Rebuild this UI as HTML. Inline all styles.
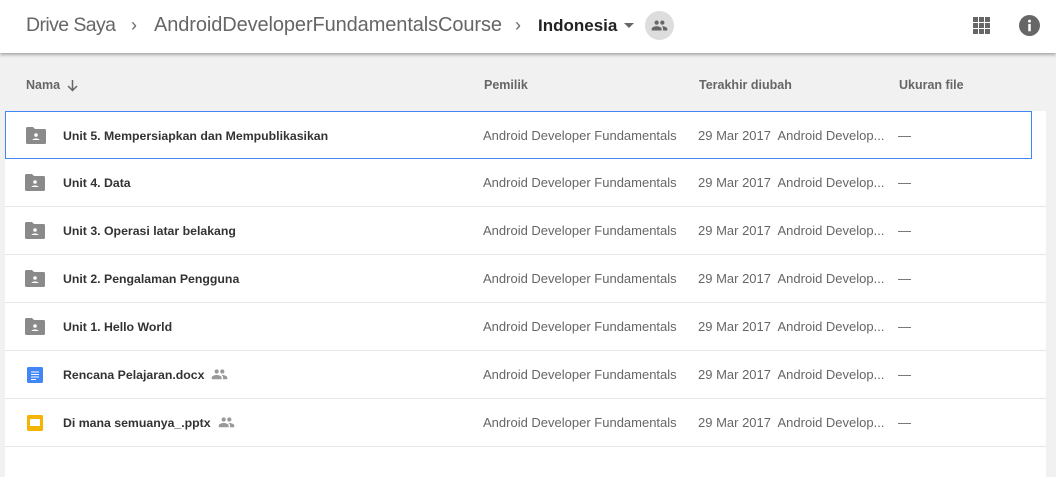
<!DOCTYPE html>
<html><head><style>
*{margin:0;padding:0;box-sizing:border-box}
body{width:1056px;height:464px;overflow:hidden;background:#f1f1f1;font-family:"Liberation Sans",sans-serif;position:relative}
.hdr{position:absolute;left:0;top:0;width:1056px;height:53px;background:#fff;box-shadow:0 2px 3px rgba(0,0,0,.3);z-index:2}
.bc{position:absolute;top:14px;font-size:20px;color:#666;white-space:nowrap}
.colh{position:absolute;top:78px;font-size:12.5px;color:#666;font-weight:bold}
.rows{position:absolute;left:5px;top:111px;width:1041px;background:#fff}
.row{position:relative;height:48px;border-bottom:1px solid #e6e6e6}
.row.sel{border:1px solid #4285f4;width:1027px;height:48px}
.row span{position:absolute;top:16px;font-size:13px;white-space:nowrap}
.row span.n{left:58px;top:17px;color:#333;font-weight:bold;font-size:12.3px}
.n svg{margin-left:7px;vertical-align:-1px}
.o{left:478px;color:#666}
.d{left:693px;color:#666}
.s{left:893px;color:#666}
.ic{position:absolute;left:20px;top:15px}
</style></head><body>
<div class="hdr">
<div class="bc" style="left:26px;letter-spacing:-0.6px;font-size:19.5px">Drive Saya</div>
<div class="bc" style="left:131px;font-size:18px;top:15px">&#8250;</div>
<div class="bc" style="left:154px;letter-spacing:-0.1px">AndroidDeveloperFundamentalsCourse</div>
<div class="bc" style="left:515px;font-size:18px;top:15px">&#8250;</div>
<div class="bc" style="left:538px;color:#222;font-weight:bold;font-size:17px;top:16px">Indonesia</div>
<svg style="position:absolute;left:624px;top:23px" width="11" height="6"><path d="M0 0h10L5 5z" fill="#666"/></svg>
<div style="position:absolute;left:645px;top:11px;width:29px;height:29px;border-radius:50%;background:#ddd"></div>
<svg style="position:absolute;left:651px;top:17px" width="17" height="17" viewBox="0 0 24 24"><path fill="#666" d="M16 11c1.66 0 2.99-1.34 2.99-3S17.66 5 16 5s-3 1.34-3 3 1.34 3 3 3zm-8 0c1.66 0 2.99-1.34 2.99-3S9.66 5 8 5 5 6.340 5 8s1.34 3 3 3zm0 2c-2.33 0-7 1.17-7 3.5V19h14v-2.5C15 14.17 10.33 13 8 13zm8 0c-.29 0-.62.02-.97.05 1.16.84 1.97 1.97 1.97 3.45V19h6v-2.5c0-2.33-4.67-3.5-7-3.5z"/></svg>
<svg style="position:absolute;left:973px;top:17px" width="17" height="17"><g fill="#666"><rect x="0" y="0" width="5" height="5"/><rect x="6" y="0" width="5" height="5"/><rect x="12" y="0" width="5" height="5"/><rect x="0" y="6" width="5" height="5"/><rect x="6" y="6" width="5" height="5"/><rect x="12" y="6" width="5" height="5"/><rect x="0" y="12" width="5" height="5"/><rect x="6" y="12" width="5" height="5"/><rect x="12" y="12" width="5" height="5"/></g></svg>
<svg style="position:absolute;left:1019px;top:15px" width="21" height="21" viewBox="0 0 20 20"><circle cx="10" cy="10" r="10" fill="#666"/><rect x="8.8" y="8.5" width="2.4" height="7" fill="#fff"/><circle cx="10" cy="5.8" r="1.4" fill="#fff"/></svg>
</div>
<div class="colh" style="left:26px">Nama</div>
<svg style="position:absolute;left:66px;top:79px" width="13" height="13" viewBox="0 0 13 13"><path d="M6.5 1v10M2 7l4.5 4.5L11 7" stroke="#666" stroke-width="1.5" fill="none"/></svg>
<div class="colh" style="left:484px">Pemilik</div>
<div class="colh" style="left:699px">Terakhir diubah</div>
<div class="colh" style="left:899px">Ukuran file</div>
<div class="rows">
<div class="row sel"><svg class="ic" width="20" height="17" viewBox="0 0 20 17"><path d="M0 1.5A1.5 1.5 0 0 1 1.5 0H7l2 2h9.5A1.5 1.5 0 0 1 20 3.5v12a1.5 1.5 0 0 1-1.5 1.5h-17A1.5 1.5 0 0 1 0 15.5z" fill="#8a8a8a"/><circle cx="10" cy="8" r="1.8" fill="#fff"/><path d="M6.5 13c0-2 7-2 7 0z" fill="#fff"/></svg><span class="n" style="left:57px">Unit 5. Mempersiapkan dan Mempublikasikan</span><span class="o" style="left:477px">Android Developer Fundamentals</span><span class="d" style="left:692px">29 Mar 2017&nbsp; Android Develop...</span><span class="s" style="left:892px">—</span></div>
<div class="row"><svg class="ic" width="20" height="17" viewBox="0 0 20 17"><path d="M0 1.5A1.5 1.5 0 0 1 1.5 0H7l2 2h9.5A1.5 1.5 0 0 1 20 3.5v12a1.5 1.5 0 0 1-1.5 1.5h-17A1.5 1.5 0 0 1 0 15.5z" fill="#8a8a8a"/><circle cx="10" cy="8" r="1.8" fill="#fff"/><path d="M6.5 13c0-2 7-2 7 0z" fill="#fff"/></svg><span class="n">Unit 4. Data</span><span class="o">Android Developer Fundamentals</span><span class="d">29 Mar 2017&nbsp; Android Develop...</span><span class="s">—</span></div>
<div class="row"><svg class="ic" width="20" height="17" viewBox="0 0 20 17"><path d="M0 1.5A1.5 1.5 0 0 1 1.5 0H7l2 2h9.5A1.5 1.5 0 0 1 20 3.5v12a1.5 1.5 0 0 1-1.5 1.5h-17A1.5 1.5 0 0 1 0 15.5z" fill="#8a8a8a"/><circle cx="10" cy="8" r="1.8" fill="#fff"/><path d="M6.5 13c0-2 7-2 7 0z" fill="#fff"/></svg><span class="n">Unit 3. Operasi latar belakang</span><span class="o">Android Developer Fundamentals</span><span class="d">29 Mar 2017&nbsp; Android Develop...</span><span class="s">—</span></div>
<div class="row"><svg class="ic" width="20" height="17" viewBox="0 0 20 17"><path d="M0 1.5A1.5 1.5 0 0 1 1.5 0H7l2 2h9.5A1.5 1.5 0 0 1 20 3.5v12a1.5 1.5 0 0 1-1.5 1.5h-17A1.5 1.5 0 0 1 0 15.5z" fill="#8a8a8a"/><circle cx="10" cy="8" r="1.8" fill="#fff"/><path d="M6.5 13c0-2 7-2 7 0z" fill="#fff"/></svg><span class="n">Unit 2. Pengalaman Pengguna</span><span class="o">Android Developer Fundamentals</span><span class="d">29 Mar 2017&nbsp; Android Develop...</span><span class="s">—</span></div>
<div class="row"><svg class="ic" width="20" height="17" viewBox="0 0 20 17"><path d="M0 1.5A1.5 1.5 0 0 1 1.5 0H7l2 2h9.5A1.5 1.5 0 0 1 20 3.5v12a1.5 1.5 0 0 1-1.5 1.5h-17A1.5 1.5 0 0 1 0 15.5z" fill="#8a8a8a"/><circle cx="10" cy="8" r="1.8" fill="#fff"/><path d="M6.5 13c0-2 7-2 7 0z" fill="#fff"/></svg><span class="n">Unit 1. Hello World</span><span class="o">Android Developer Fundamentals</span><span class="d">29 Mar 2017&nbsp; Android Develop...</span><span class="s">—</span></div>
<div class="row"><svg class="ic" style="left:22px;top:16px" width="16" height="16"><rect width="16" height="16" rx="1.5" fill="#4285f4"/><path d="M4 5h8M4 7.5h8M4 10h8M4 12.5h5" stroke="#fff" stroke-width="1"/></svg><span class="n">Rencana Pelajaran.docx<svg width="17" height="12" viewBox="0 3 24 17"><path fill="#999" d="M16 11c1.66 0 2.99-1.34 2.99-3S17.66 5 16 5s-3 1.34-3 3 1.34 3 3 3zm-8 0c1.66 0 2.99-1.34 2.99-3S9.66 5 8 5 5 6.34 5 8s1.34 3 3 3zm0 2c-2.33 0-7 1.17-7 3.5V19h14v-2.5C15 14.17 10.33 13 8 13zm8 0c-.29 0-.62.02-.97.05 1.16.84 1.97 1.97 1.97 3.45V19h6v-2.5c0-2.33-4.67-3.5-7-3.5z"/></svg></span><span class="o">Android Developer Fundamentals</span><span class="d">29 Mar 2017&nbsp; Android Develop...</span><span class="s">—</span></div>
<div class="row"><svg class="ic" style="left:22px;top:16px" width="16" height="16"><rect width="16" height="16" rx="1.5" fill="#f4b400"/><rect x="3" y="4" width="10" height="7" fill="#fff"/></svg><span class="n">Di mana semuanya_.pptx<svg width="17" height="12" viewBox="0 3 24 17"><path fill="#999" d="M16 11c1.66 0 2.99-1.34 2.99-3S17.66 5 16 5s-3 1.34-3 3 1.34 3 3 3zm-8 0c1.66 0 2.99-1.34 2.99-3S9.66 5 8 5 5 6.34 5 8s1.34 3 3 3zm0 2c-2.33 0-7 1.17-7 3.5V19h14v-2.5C15 14.17 10.33 13 8 13zm8 0c-.29 0-.62.02-.97.05 1.16.84 1.97 1.97 1.97 3.45V19h6v-2.5c0-2.33-4.67-3.5-7-3.5z"/></svg></span><span class="o">Android Developer Fundamentals</span><span class="d">29 Mar 2017&nbsp; Android Develop...</span><span class="s">—</span></div>
<div class="row" style="border:none;height:30px"></div>
</div>
</body></html>
